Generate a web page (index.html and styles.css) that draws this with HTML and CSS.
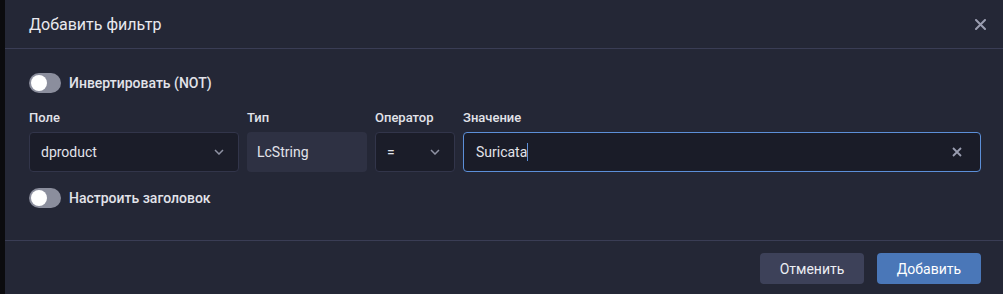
FILE: index.html
```html
<html>
<head>
<meta charset="utf-8">
<link rel="stylesheet" href="styles.css">
</head>
<body>
<div class="dialog">
	<div class="head">
		<span class="title">Добавить фильтр</span>
		<span class="close">
			<svg width="11" height="11" viewBox="0 0 11 11"><path d="M1 1L10 10M10 1L1 10" stroke="#9a9db0" stroke-width="2" stroke-linecap="round"/></svg>
		</span>
	</div>
	<div class="body">
		<label class="switch"><span class="track"><span class="knob"></span></span>Инвертировать (NOT)</label>

		<div class="fields">
			<div class="col col-field">
				<div class="lbl">Поле</div>
				<div class="box select">dproduct
					<svg class="chev" width="10" height="6" viewBox="0 0 10 6"><path d="M1 1L5 5L9 1" fill="none" stroke="#8f92a3" stroke-width="1.5"/></svg>
				</div>
			</div>
			<div class="col col-type">
				<div class="lbl">Тип</div>
				<div class="box plain">LcString</div>
			</div>
			<div class="col col-op">
				<div class="lbl">Оператор</div>
				<div class="box select">=
					<svg class="chev" width="10" height="6" viewBox="0 0 10 6"><path d="M1 1L5 5L9 1" fill="none" stroke="#8f92a3" stroke-width="1.5"/></svg>
				</div>
			</div>
			<div class="col col-val">
				<div class="lbl">Значение</div>
				<div class="box focus"><span>Suricata<span class="caret"></span></span>
					<svg class="clear" width="10" height="10" viewBox="0 0 10 10"><path d="M1 1L9 9M9 1L1 9" stroke="#9a9db0" stroke-width="1.8"/></svg>
				</div>
			</div>
		</div>

		<label class="switch second"><span class="track"><span class="knob"></span></span>Настроить заголовок</label>
	</div>
	<div class="foot">
		<button class="btn cancel">Отменить</button>
		<button class="btn add">Добавить</button>
	</div>
</div>
</body>
</html>
```
FILE: styles.css
```css
body{
margin: 0;
background: #0b0b0e;
font-family: Roboto, "Liberation Sans", sans-serif;
color: #e2e3ea;
}
.dialog{
margin-left: 5px;
height: 294px;
background: #242736;
}
.head{
height: 48px;
border-bottom: 1px solid #3a3d55;
display: flex;
align-items: center;
justify-content: space-between;
padding: 0 17px 0 24px;
}
.title{
font-size: 16px;
color: #e9e9ef;
}
.close{
display: flex;
}
.body{
padding: 24px 22px 32px 24px;
border-bottom: 1px solid #3a3d55;
}
.switch{
display: flex;
align-items: center;
height: 20px;
font-size: 14px;
font-weight: 500;
gap: 8px;
}
.track{
width: 32px;
height: 20px;
border-radius: 10px;
background: #8b8e9d;
position: relative;
}
.knob{
position: absolute;
left: 2px;
top: 2px;
width: 16px;
height: 16px;
border-radius: 50%;
background: #fff;
}
.second{
margin-top: 16px;
}
.fields{
display: flex;
gap: 8px;
margin-top: 17px;
}
.col-field{ width: 210px; }
.col-type{ width: 120px; }
.col-op{ width: 80px; }
.col-val{ flex: 1; }
.lbl{
font-size: 13px;
font-weight: 500;
line-height: 16px;
margin-bottom: 6px;
}
.box{
height: 40px;
box-sizing: border-box;
border-radius: 4px;
display: flex;
align-items: center;
justify-content: space-between;
font-size: 14px;
padding: 0 14px 0 11px;
}
.select{
background: #1b1d29;
border: 1px solid #32354a;
}
.plain{
background: #2e3143;
padding-left: 10px;
}
.focus{
background: #1a1c28;
border: 1px solid #5c8fd8;
padding: 0 18px 0 12px;
}
.caret{
display: inline-block;
width: 1px;
height: 18px;
background: #5c8fd8;
vertical-align: -4px;
}
.foot{
display: flex;
justify-content: flex-end;
gap: 13px;
padding: 12px 22px 0 0;
}
.btn{
width: 104px;
height: 31px;
border: none;
border-radius: 4px;
font-family: Roboto, "Liberation Sans", sans-serif;
font-size: 14px;
color: #eceef4;
}
.cancel{
background: #3d4159;
}
.add{
background: #4a77b8;
color: #fff;
}
```
